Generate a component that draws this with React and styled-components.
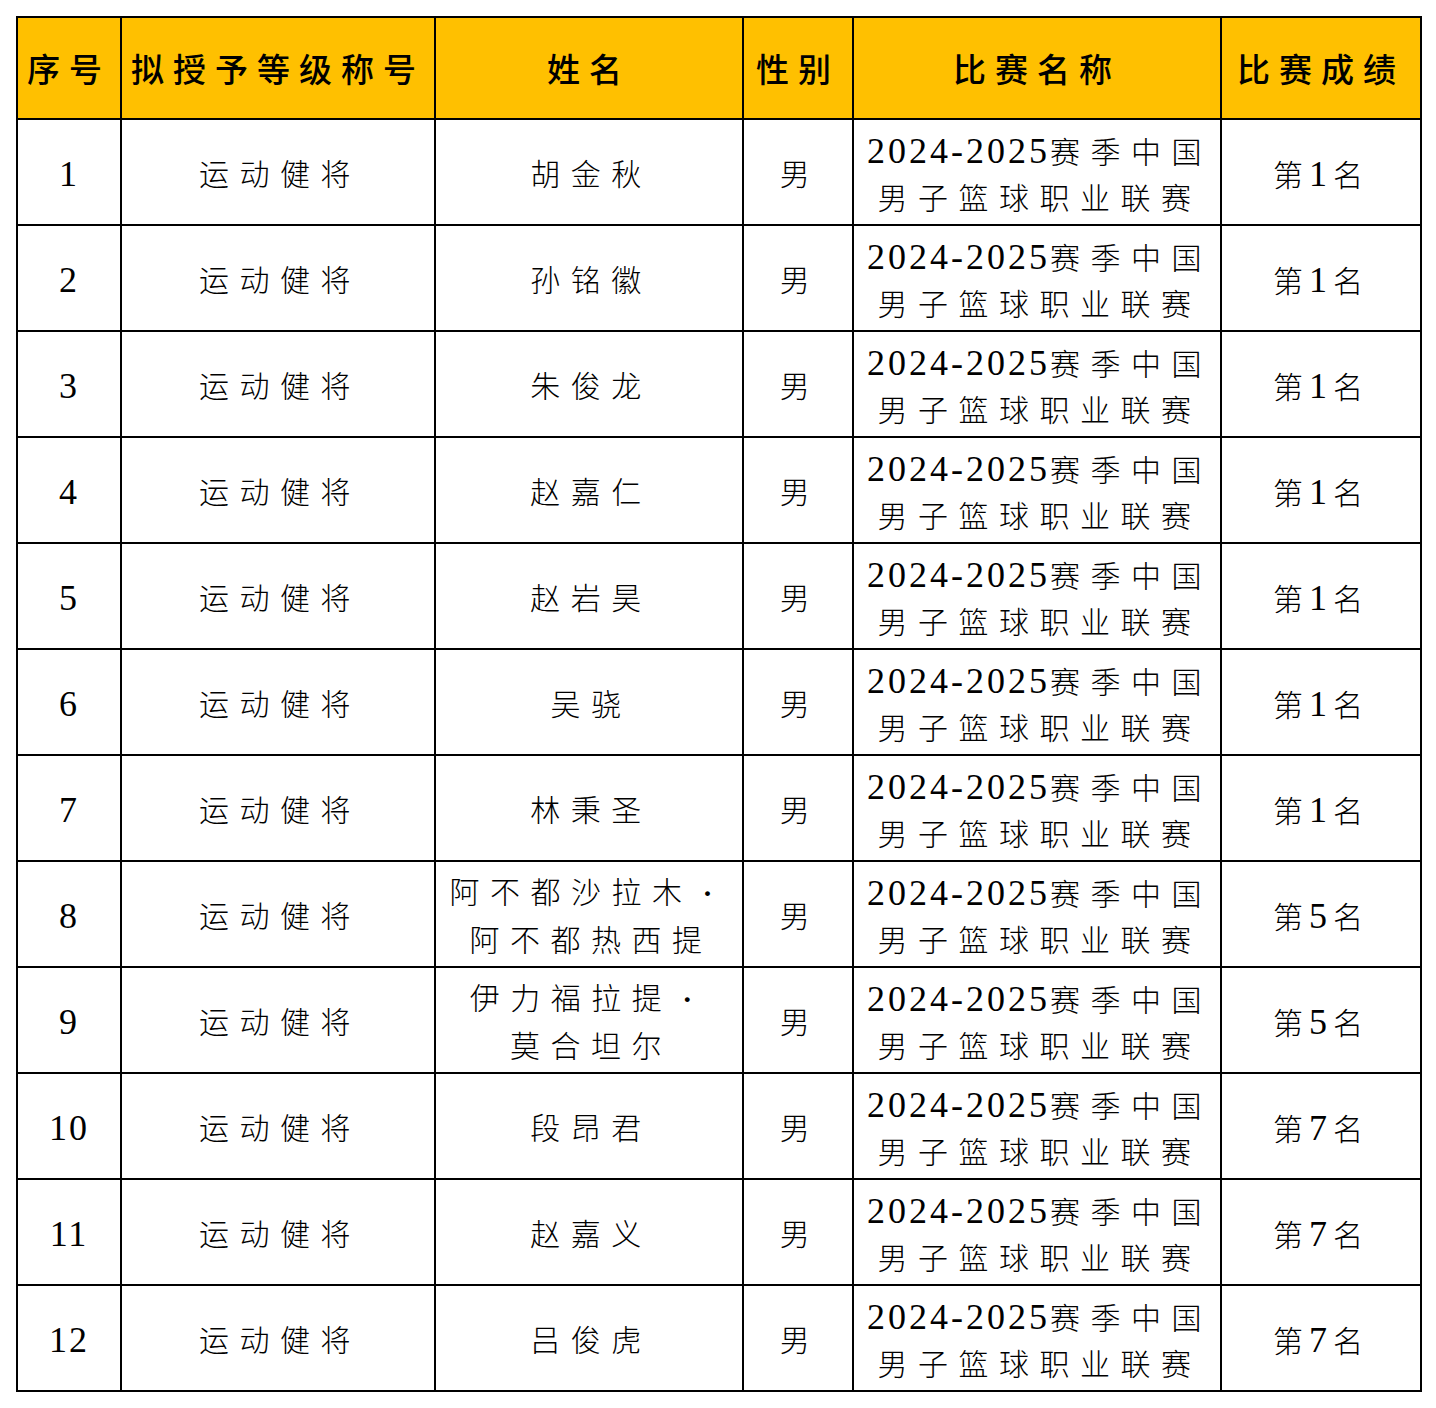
import styled, { createGlobalStyle } from "styled-components";

const GlobalStyle = createGlobalStyle`
    html, body {
        margin: 0;
        padding: 0;
        background: #ffffff;
    }
    body {
        padding: 16px;
        font-family: "Liberation Serif", "Noto Sans CJK SC", serif;
        color: #000000;
    }
`;

const rows = [
    { no: 1, name: ["胡金秋"], rank: 1 },
    { no: 2, name: ["孙铭徽"], rank: 1 },
    { no: 3, name: ["朱俊龙"], rank: 1 },
    { no: 4, name: ["赵嘉仁"], rank: 1 },
    { no: 5, name: ["赵岩昊"], rank: 1 },
    { no: 6, name: ["吴骁"], rank: 1 },
    { no: 7, name: ["林秉圣"], rank: 1 },
    { no: 8, name: ["阿不都沙拉木", "阿不都热西提"], rank: 5 },
    { no: 9, name: ["伊力福拉提", "莫合坦尔"], rank: 5 },
    { no: 10, name: ["段昂君"], rank: 7 },
    { no: 11, name: ["赵嘉义"], rank: 7 },
    { no: 12, name: ["吕俊虎"], rank: 7 },
];

const columns = [
    { title: "序号", width: 104 },
    { title: "拟授予等级称号", width: 314 },
    { title: "姓名", width: 308 },
    { title: "性别", width: 110 },
    { title: "比赛名称", width: 368 },
    { title: "比赛成绩", width: 200 },
];

const App = () => {
    return (
        <>
            <GlobalStyle />
            <Table>
                <colgroup>
                    {columns.map((c) => (
                        <col key={c.title} style={{ width: c.width }} />
                    ))}
                </colgroup>
                <thead>
                    <tr>
                        {columns.map((c) => (
                            <HeadCell key={c.title}>{c.title}</HeadCell>
                        ))}
                    </tr>
                </thead>
                <tbody>
                    {rows.map((r) => (
                        <Row key={r.no}>
                            <Cell $spacing={2} $indent={0}>
                                <Num>{r.no}</Num>
                            </Cell>
                            <Cell>运动健将</Cell>
                            <Cell>
                                {r.name.length > 1 ? (
                                    <>
                                        <Line>
                                            {r.name[0]}
                                            <Dot>·</Dot>
                                        </Line>
                                        <Line>{r.name[1]}</Line>
                                    </>
                                ) : (
                                    r.name[0]
                                )}
                            </Cell>
                            <Cell>男</Cell>
                            <Cell $indent={5}>
                                <Line>
                                    <Num $spacing={3}>2024-2025</Num>赛季中国
                                </Line>
                                <Line>男子篮球职业联赛</Line>
                            </Cell>
                            <Cell $spacing={6} $indent={0}>
                                第<Num $spacing={6}>{r.rank}</Num>名
                            </Cell>
                        </Row>
                    ))}
                </tbody>
            </Table>
        </>
    );
};

const Table = styled.table`
    width: 1404px;
    table-layout: fixed;
    border-collapse: collapse;
    border: 2px solid #000000;
`;

const HeadCell = styled.th`
    height: 100px;
    padding: 0;
    background: #ffc000;
    border: 2px solid #000000;
    font-family: "Liberation Serif", "Noto Sans CJK SC", serif;
    font-size: 33px;
    font-weight: 500;
    letter-spacing: 9px;
    text-align: center;
    vertical-align: middle;
    white-space: nowrap;
`;

const Row = styled.tr`
    height: 106px;
`;

const Cell = styled.td`
    height: 98px;
    box-sizing: border-box;
    padding: 6px 0 0 ${({ $indent = 4 }) => $indent}px;
    border: 2px solid #000000;
    font-size: 30px;
    font-weight: 300;
    letter-spacing: ${({ $spacing = 10.5 }) => $spacing}px;
    line-height: 50px;
    text-align: center;
    vertical-align: middle;
    white-space: nowrap;
    overflow: hidden;
`;

const Line = styled.div`
    height: 48px;
    line-height: 48px;
`;

const Num = styled.span`
    font-family: "Liberation Serif", serif;
    font-size: 36px;
    font-weight: 400;
    letter-spacing: ${({ $spacing = 2 }) => $spacing}px;
`;

const Dot = styled.span`
    display: inline-block;
    width: 30px;
    margin-right: 10px;
    letter-spacing: 0;
    text-align: center;
    font-weight: 700;
`;

export default App;
